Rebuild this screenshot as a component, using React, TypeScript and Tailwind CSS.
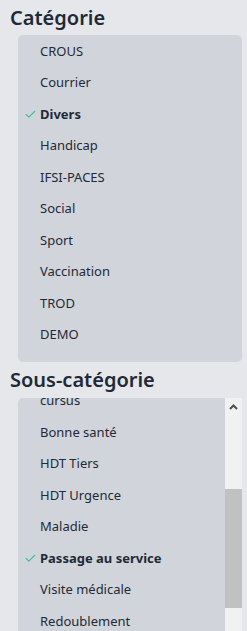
import { Check } from "lucide-react";

const categories = ["CROUS", "Courrier", "Divers", "Handicap", "IFSI-PACES", "Social", "Sport", "Vaccination", "TROD", "DEMO"];

const subCategories = [
  "cursus",
  "Bonne santé",
  "HDT Tiers",
  "HDT Urgence",
  "Maladie",
  "Passage au service",
  "Visite médicale",
  "Redoublement",
];

const Item = ({ label, selected }: { label: string; selected: boolean }) => (
  <div className="flex items-center relative pl-[22px] py-[6.75px] text-[13px] leading-[18px] text-[#1f2937]">
    {selected && <Check className="absolute left-[6px] top-[10px] w-[13px] h-[13px] text-[#3dbf9a]" strokeWidth={2} />}
    <span className={selected ? "font-bold" : ""}>{label}</span>
  </div>
);

const App = () => {
  return (
    <div className="w-[247px] h-[631px] overflow-hidden bg-[#e5e7eb] font-['Noto_Sans',sans-serif]">
      <h2 className="h-[35px] pl-[10px] flex items-center text-[20px] font-semibold text-[#1f2937]">Catégorie</h2>
      <div className="ml-[18px] mr-[5px] bg-[#d1d5db] rounded-[5px] pb-3">
        {categories.map((c) => (
          <Item key={c} label={c} selected={c === "Divers"} />
        ))}
      </div>
      <h2 className="h-[36px] pl-[10px] flex items-center text-[20px] font-semibold text-[#1f2937]">Sous-catégorie</h2>
      <div className="ml-[18px] mr-[5px] h-[256px] flex bg-[#d1d5db] rounded-tl-[5px]">
        {/* list is scrolled a bit, first item partly hidden */}
        <div className="flex-1 overflow-hidden">
          <div className="-mt-[13.5px]">
            {subCategories.map((c) => (
              <Item key={c} label={c} selected={c === "Passage au service"} />
            ))}
          </div>
        </div>
        {/* scrollbar */}
        <div className="w-[17px] bg-[#f1f1f1] flex flex-col">
          <div className="h-[17px] flex items-center justify-center">
            <svg width="9" height="6" viewBox="0 0 9 6">
              <polyline points="1,5 4.5,1.5 8,5" fill="none" stroke="#505050" strokeWidth="2" />
            </svg>
          </div>
          <div className="h-[74px]" />
          <div className="h-[119px] bg-[#c1c1c1]" />
        </div>
      </div>
    </div>
  );
};

export default App;
